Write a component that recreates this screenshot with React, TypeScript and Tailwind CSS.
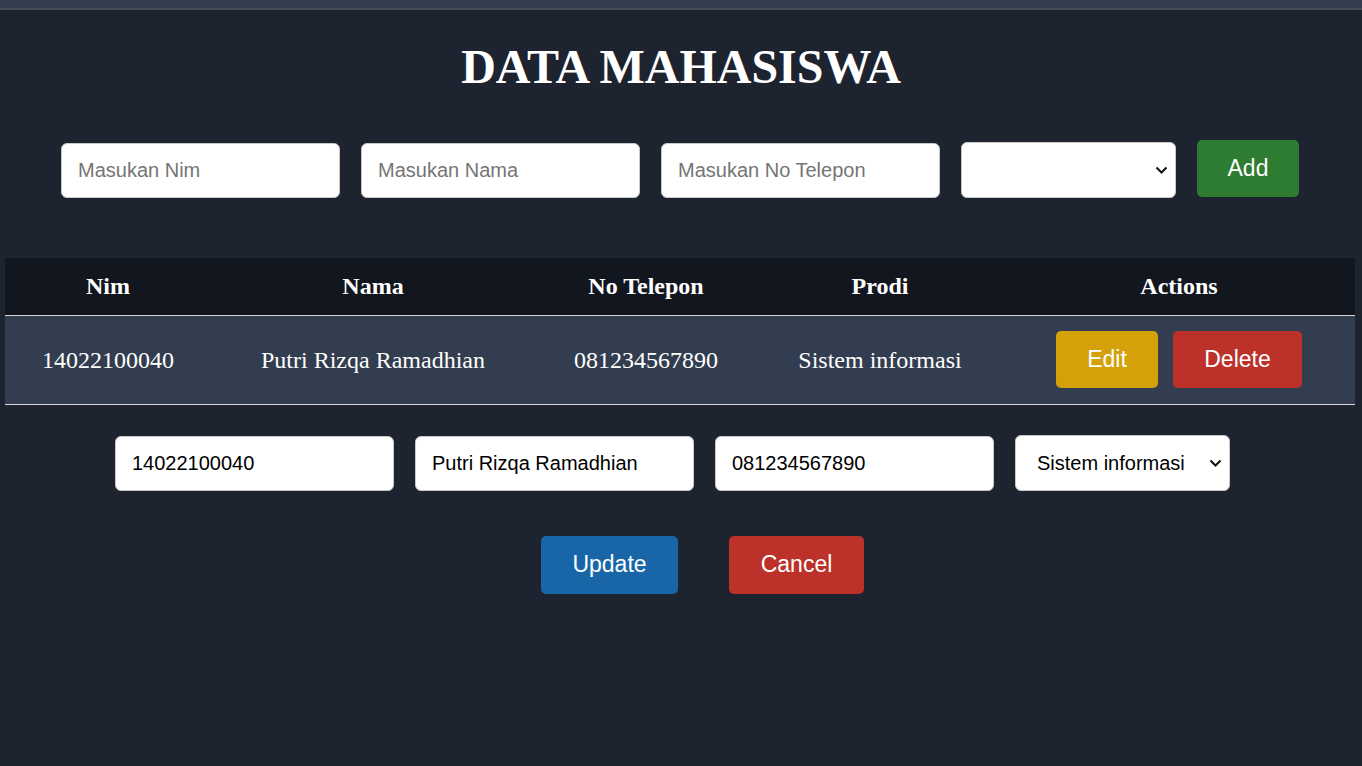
import { useState } from 'react';

type Mahasiswa = {
    nim: string;
    nama: string;
    telepon: string;
    prodi: string;
};

const Chevron = () => (
    <svg
        className="pointer-events-none absolute right-[8px] top-1/2 -translate-y-1/2"
        width="13"
        height="8"
        viewBox="0 0 13 8"
        fill="none"
    >
        <path d="M1.5 1.5 L6.5 6.5 L11.5 1.5" stroke="#111" strokeWidth="2" />
    </svg>
);

const inputClass =
    'w-[279px] h-[55px] rounded-[6px] border border-[#c8c8c8] bg-white pl-4 text-[20px] text-black placeholder:text-[#757575] outline-none';

const SelectProdi = ({ value, onChange }: { value: string; onChange: (v: string) => void }) => (
    <div className="relative w-[215px] h-[56px]">
        <select
            value={value}
            onChange={(e) => onChange(e.target.value)}
            className="w-full h-full appearance-none rounded-[6px] border border-[#c8c8c8] bg-white pl-[21px] text-[20px] text-black outline-none"
        >
            <option value=""></option>
            <option value="Sistem informasi">Sistem informasi</option>
            <option value="Teknik informatika">Teknik informatika</option>
        </select>
        <Chevron />
    </div>
);

const App = () => {
    const [data] = useState<Mahasiswa[]>([
        {
            nim: '14022100040',
            nama: 'Putri Rizqa Ramadhian',
            telepon: '081234567890',
            prodi: 'Sistem informasi',
        },
    ]);
    const [prodi, setProdi] = useState('');
    const [edit, setEdit] = useState<Mahasiswa>(data[0]);

    return (
        <div className="min-h-[766px] bg-[#1e2330] text-white font-['Liberation_Sans',Arial,sans-serif]">
            <div className="h-[8px] bg-[#343c4f]" />
            <div className="h-[2px] bg-[#474b55]" />

            <h1 className="pt-[33px] text-center text-[48px] font-bold leading-none font-['Liberation_Serif','Times_New_Roman',serif]">
                DATA MAHASISWA
            </h1>

            <div className="mt-[49px] flex items-end justify-center gap-[21px] pr-[2px]">
                <input className={inputClass} placeholder="Masukan Nim" />
                <input className={inputClass} placeholder="Masukan Nama" />
                <input className={inputClass} placeholder="Masukan No Telepon" />
                <SelectProdi value={prodi} onChange={setProdi} />
                <button className="mb-[1px] h-[57px] w-[102px] rounded-[5px] bg-[#2e7b32] text-[23px] text-white">
                    Add
                </button>
            </div>

            <div className="mt-[60px] px-[5px] pr-[7px]">
                <table className="w-full border-collapse font-['Liberation_Serif','Times_New_Roman',serif] text-[24px]">
                    <thead>
                        <tr className="h-[57px] bg-[#12161e]">
                            <th className="w-[206px] border-b border-[#d4d4d4] font-bold">Nim</th>
                            <th className="w-[324px] border-b border-[#d4d4d4] font-bold">Nama</th>
                            <th className="w-[222px] border-b border-[#d4d4d4] font-bold">No Telepon</th>
                            <th className="w-[246px] border-b border-[#d4d4d4] font-bold">Prodi</th>
                            <th className="border-b border-[#d4d4d4] font-bold">Actions</th>
                        </tr>
                    </thead>
                    <tbody>
                        {data.map((m) => (
                            <tr key={m.nim} className="h-[89px] bg-[#323d4f]">
                                <td className="border-b border-[#d4d4d4] text-center">{m.nim}</td>
                                <td className="border-b border-[#d4d4d4] text-center">{m.nama}</td>
                                <td className="border-b border-[#d4d4d4] text-center">{m.telepon}</td>
                                <td className="border-b border-[#d4d4d4] text-center">{m.prodi}</td>
                                <td className="border-b border-[#d4d4d4]">
                                    <div className="flex justify-center gap-[15px] font-['Liberation_Sans',Arial,sans-serif] text-[23px]">
                                        <button
                                            onClick={() => setEdit(m)}
                                            className="h-[57px] w-[102px] rounded-[5px] bg-[#d4a10a] text-white"
                                        >
                                            Edit
                                        </button>
                                        <button className="h-[57px] w-[129px] rounded-[5px] bg-[#bc3129] text-white">
                                            Delete
                                        </button>
                                    </div>
                                </td>
                            </tr>
                        ))}
                    </tbody>
                </table>
            </div>

            <div className="mt-[30px] flex items-end justify-center gap-[21px] pr-[17px]">
                <input
                    className={inputClass}
                    value={edit.nim}
                    onChange={(e) => setEdit({ ...edit, nim: e.target.value })}
                />
                <input
                    className={inputClass}
                    value={edit.nama}
                    onChange={(e) => setEdit({ ...edit, nama: e.target.value })}
                />
                <input
                    className={inputClass}
                    value={edit.telepon}
                    onChange={(e) => setEdit({ ...edit, telepon: e.target.value })}
                />
                <SelectProdi value={edit.prodi} onChange={(v) => setEdit({ ...edit, prodi: v })} />
            </div>

            <div className="mt-[45px] flex justify-center gap-[51px] pl-[43px]">
                <button className="h-[58px] w-[137px] rounded-[5px] bg-[#1866a8] text-[23px] text-white">
                    Update
                </button>
                <button className="h-[58px] w-[135px] rounded-[5px] bg-[#bc3129] text-[23px] text-white">
                    Cancel
                </button>
            </div>
        </div>
    );
};

export default App;
